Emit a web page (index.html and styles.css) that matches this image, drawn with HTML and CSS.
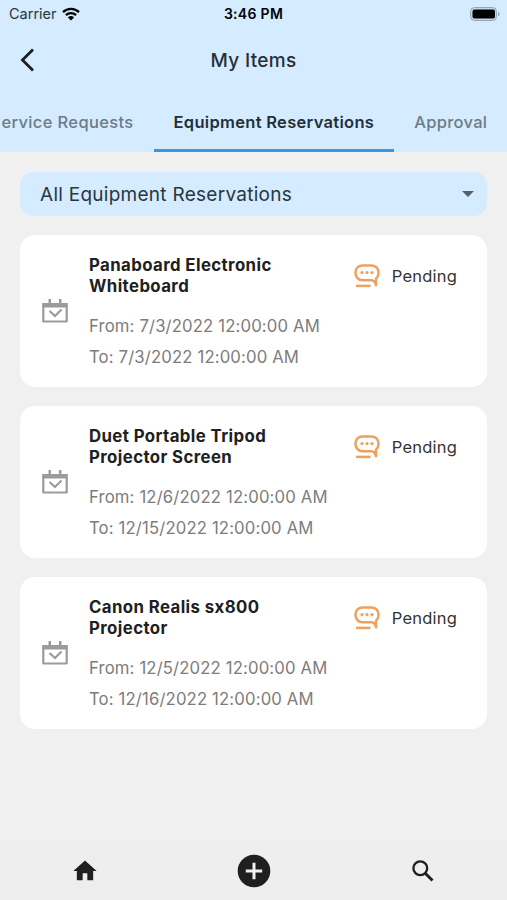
FILE: index.html
```html
<!DOCTYPE html>
<html lang="en">
<head>
    <meta charset="UTF-8">
    <meta name="viewport" content="width=device-width, initial-scale=1.0">
    <title>My Items</title>
    <link rel="stylesheet" href="styles.css">
</head>
<body>
    <svg class="sprite">
        <symbol id="calendar" viewBox="0 0 26 24">
            <path d="M1.300 5h23.400v17.500H1.300z" fill="none" stroke="#9b9b9b" stroke-width="2.200" stroke-linejoin="round"/>
            <path d="M.5 4h25v4.500H.5zM6.500 0h2.500v5H6.500zM17 0h2.500v5h-2.500z" fill="#9b9b9b"/>
            <path d="M7.500 12l5.500 5 6.500-6.500" fill="none" stroke="#9b9b9b" stroke-width="2.200"/>
        </symbol>
        <symbol id="chat" viewBox="0 0 26 24">
            <path d="M8.500 1.400h9a7 7 0 0 1 7 7v.6c0 2.600-1.200 4.500-2.500 5.600v6.700c-.6-3-2.200-5-4.700-5H8.500a7 7 0 0 1-7-7v-.9a7 7 0 0 1 7-7z" fill="none" stroke="#eea05c" stroke-width="2.500" stroke-linejoin="round"/>
            <path d="M2 21.900h14.500" stroke="#eea05c" stroke-width="2.500"/>
            <circle cx="8" cy="8.600" r="1.600" fill="#eea05c"/>
            <circle cx="13" cy="8.600" r="1.600" fill="#eea05c"/>
            <circle cx="18" cy="8.600" r="1.600" fill="#eea05c"/>
        </symbol>
    </svg>

    <header>
        <div class="status-bar">
            <div class="carrier">
                <span>Carrier</span>
                <svg width="18" height="14" viewBox="0 0 18 14">
                    <path d="M1 5.200a11.500 11.500 0 0 1 16 0M3.900 8.100a7.400 7.400 0 0 1 10.200 0" fill="none" stroke="#000" stroke-width="2.300"/>
                    <path d="M9 13.500L5.900 10.400a4.500 4.500 0 0 1 6.200 0z"/>
                </svg>
            </div>
            <span class="time">3:46 PM</span>
            <svg class="battery" width="30" height="14" viewBox="0 0 30 14">
                <rect x=".5" y=".5" width="26" height="13" rx="4" fill="#c4d7e5" stroke="#94a6b3"/>
                <rect x="2.500" y="2.500" width="22.500" height="9" rx="2"/>
                <path d="M28 4.800c2.300.8 2.300 3.600 0 4.400z" fill="#94a6b3"/>
            </svg>
        </div>
        <div class="title-bar">
            <svg class="back" width="15" height="24" viewBox="0 0 15 24">
                <path d="M13 1.500L2.500 12 13 22.500" fill="none" stroke="#1c1f22" stroke-width="2.800"/>
            </svg>
            <h1>My Items</h1>
        </div>
        <nav class="tabs">
            <span class="tab">ervice Requests</span>
            <span class="tab active">Equipment Reservations</span>
            <span class="tab">Approval</span>
        </nav>
    </header>

    <main>
        <div class="filter">
            <span>All Equipment Reservations</span>
            <svg width="12" height="6" viewBox="0 0 12 6"><path d="M0 0h12L6 6z" fill="#54616b"/></svg>
        </div>

        <div class="card">
            <svg class="calendar"><use href="#calendar"/></svg>
            <div class="details">
                <h2>Panaboard Electronic Whiteboard</h2>
                <p>From: 7/3/2022 12:00:00 AM</p>
                <p>To: 7/3/2022 12:00:00 AM</p>
            </div>
            <div class="status"><svg><use href="#chat"/></svg><span>Pending</span></div>
        </div>

        <div class="card">
            <svg class="calendar"><use href="#calendar"/></svg>
            <div class="details">
                <h2>Duet Portable Tripod Projector Screen</h2>
                <p>From: 12/6/2022 12:00:00 AM</p>
                <p>To: 12/15/2022 12:00:00 AM</p>
            </div>
            <div class="status"><svg><use href="#chat"/></svg><span>Pending</span></div>
        </div>

        <div class="card">
            <svg class="calendar"><use href="#calendar"/></svg>
            <div class="details">
                <h2>Canon Realis sx800 Projector</h2>
                <p>From: 12/5/2022 12:00:00 AM</p>
                <p>To: 12/16/2022 12:00:00 AM</p>
            </div>
            <div class="status"><svg><use href="#chat"/></svg><span>Pending</span></div>
        </div>
    </main>

    <footer>
        <svg width="28" height="28" viewBox="0 0 24 24"><path d="M10 20v-6h4v6h5v-8h3L12 3 2 12h3v8z" fill="#1f1f1f"/></svg>
        <svg width="34" height="34" viewBox="0 0 34 34">
            <circle cx="17" cy="17" r="16.300" fill="#1f1f1f"/>
            <path d="M17 8.800v16.400M8.800 17h16.400" stroke="#f0f0f0" stroke-width="3"/>
        </svg>
        <svg width="22" height="22" viewBox="0 0 22 22">
            <circle cx="8.300" cy="8.300" r="6.900" fill="none" stroke="#1f1f1f" stroke-width="2.300"/>
            <path d="M13.200 13.200l7.300 7.300" stroke="#1f1f1f" stroke-width="2.900"/>
        </svg>
    </footer>
</body>
</html>
```

FILE: styles.css
```css
* {
    box-sizing: border-box;
}

body {
    font-family: Inter, "Liberation Sans", sans-serif;
    margin: 0;
    height: 900px;
    display: flex;
    flex-direction: column;
    overflow: hidden;
    background-color: #f0f0f0;
}

h1, h2, p {
    margin: 0;
}

.sprite {
    display: none;
}

header {
    height: 152px;
    overflow: hidden;
    background-color: #d5ebff;
}

.status-bar {
    height: 27px;
    display: grid;
    grid-template-columns: 1fr auto 1fr;
    align-items: center;
    padding: 0 7px 0 9px;
}

.carrier {
    display: flex;
    align-items: center;
    gap: 5px;
    font-size: 14.5px;
    color: #2b343b;
}

.time {
    margin-right: 2px;
    font-size: 14px;
    font-weight: 600;
    letter-spacing: 0.3px;
}

.battery {
    justify-self: end;
}

.title-bar {
    height: 65px;
    display: grid;
    grid-template-columns: 15px 1fr 15px;
    align-items: center;
    padding: 0 20px;
}

.title-bar h1 {
    padding-top: 1px;
    font-size: 19px;
    font-weight: 450;
    letter-spacing: 0.3px;
    text-align: center;
    color: #263038;
}

.tabs {
    height: 60px;
    display: flex;
}

.tab {
    flex: none;
    padding: 0 20px;
    line-height: 60px;
    font-size: 16.5px;
    font-weight: 500;
    letter-spacing: 0.3px;
    color: #6b7b88;
}

.tab:first-child {
    padding-left: 1.5px;
    letter-spacing: 0.35px;
}

.tab.active {
    font-weight: 600;
    color: #22303a;
    border-bottom: 3px solid #3498e2;
}

main {
    flex: 1;
    padding: 20px 20px 0;
}

.filter {
    height: 44px;
    margin-bottom: 19.4px;
    padding: 0 13px 0 20px;
    display: flex;
    align-items: center;
    justify-content: space-between;
    border-radius: 13px;
    background-color: #d5ebff;
    font-size: 19px;
    letter-spacing: 0.27px;
    color: #293640;
}

.card {
    height: 151.5px;
    margin-bottom: 19.5px;
    padding: 19.5px 30px 0 22px;
    display: flex;
    border-radius: 15px;
    background-color: #fff;
}

.calendar {
    width: 26px;
    height: 24px;
    margin-top: 44px;
}

.details {
    width: 245px;
    margin-left: 21px;
}

.details h2 {
    width: 200px;
    margin-bottom: 14px;
    font-size: 16.8px;
    font-weight: 650;
    line-height: 21px;
    letter-spacing: 0.4px;
    color: #202020;
}

.details p {
    font-size: 16.7px;
    line-height: 31px;
    letter-spacing: 0.15px;
    color: #7c7c7c;
    white-space: nowrap;
}

.status {
    height: 42px;
    margin-left: auto;
    display: flex;
    align-items: center;
    gap: 12px;
    font-size: 16.5px;
    letter-spacing: 0.2px;
    color: #333;
}

.status svg {
    width: 26px;
    height: 24px;
}

footer {
    height: 60px;
    display: grid;
    grid-template-columns: repeat(3, 1fr);
    place-items: center;
    padding-top: 1px;
    background-color: #eee;
}
```
